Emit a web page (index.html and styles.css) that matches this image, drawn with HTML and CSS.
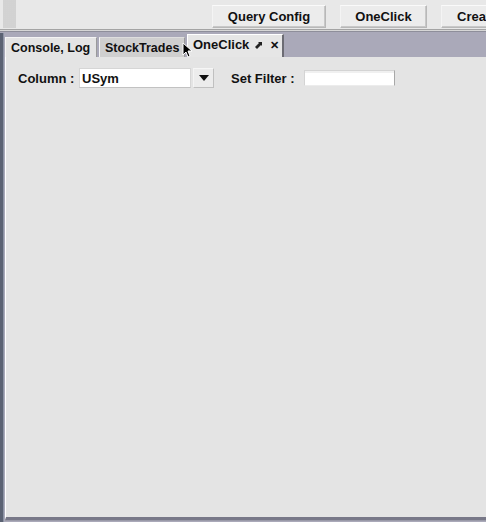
FILE: index.html
```html
<!DOCTYPE html>
<html>
  <head>
    <title>OneClick</title>
    <meta name="viewport" content="width=device-width, initial-scale=1.0" />
    <link rel="stylesheet" href="styles.css">
  </head>
  <body>
    <div class="toolbar">
      <div class="grip"></div>
      <div class="toolbar-buttons">
        <button class="tool-button query">Query Config</button>
        <button class="tool-button oneclick">OneClick</button>
        <button class="tool-button create">Create</button>
      </div>
    </div>
    <div class="main">
      <div class="tabs">
        <div class="tab tab-console">Console, Log</div>
        <div class="tab tab-hover">StockTrades</div>
        <div class="tab tab-active">
          <span class="tab-title">OneClick</span>
          <svg class="pin" width="8" height="8" viewBox="0 0 8 8">
            <path d="M3 1 L7 1 L7 5 L6 4 L2 8 L0 6 L4 2 Z" fill="#222" />
          </svg>
          <span class="close">&#x2715;</span>
        </div>
        <svg class="cursor" width="10" height="16" viewBox="0 0 10 16">
          <path d="M1 1 L1 13 L4 10 L6 15 L8 14 L6 9 L10 9 Z" fill="#000" stroke="#fff" stroke-width="1" />
        </svg>
      </div>
      <div class="panel">
        <div class="filter-row">
          <span class="label label-column">Column :</span>
          <div class="combo">
            <div class="combo-field">USym</div>
            <div class="combo-arrow">
              <svg width="10" height="6" viewBox="0 0 10 6"><path d="M0 0 L10 0 L5 6 Z" fill="#111" /></svg>
            </div>
          </div>
          <span class="label label-filter">Set Filter :</span>
          <div class="text-field"></div>
        </div>
      </div>
    </div>
  </body>
</html>
```
FILE: styles.css
```css
html,
body {
  margin: 0;
  height: 100%;
}
body {
  width: 486px;
  height: 522px;
  overflow: hidden;
  font-family: "Liberation Sans", Arial, sans-serif;
  font-weight: bold;
  font-size: 13px;
  color: #111;
  background: #aaa9b9;
}
.toolbar {
  height: 29px;
  display: flex;
  background: #e8e8e8;
  border-bottom: 1px solid #a4a4a4;
  box-shadow: 0 1px 0 #d6d6d6, 0 2px 0 #8e8e9a;
}
.grip {
  width: 13px;
  margin: 0 0 1px 3px;
  background-color: #f0f0f0;
  background-image: radial-gradient(circle at 1px 1px, #c8c8c8 0.6px, transparent 1px);
  background-size: 2px 2px;
}
.toolbar-buttons {
  flex: 1;
  display: flex;
  justify-content: flex-end;
  align-items: flex-start;
  gap: 14px;
  padding-top: 5px;
  overflow: hidden;
}
.tool-button {
  font: inherit;
  color: #111;
  height: 23px;
  padding: 0;
  background: #ececec;
  border: 1px solid #b8b8b8;
  border-top-color: #fafafa;
  border-left-color: #f4f4f4;
  box-shadow: inset -1px -1px 0 #c8c8c8;
}
.query {
  width: 114px;
}
.oneclick {
  width: 87px;
}
.create {
  width: 70px;
  flex-shrink: 0;
  margin-right: -25px;
  text-align: left;
  padding-left: 15px;
  overflow: hidden;
}
.main {
  height: 490px;
  margin-top: 3px;
  border-left: 3px solid #5b6273;
  box-shadow: inset 1px 0 0 #8c93a4;
  display: flex;
  flex-direction: column;
}
.tabs {
  position: relative;
  height: 24px;
  display: flex;
  align-items: flex-end;
  padding-left: 2px;
  gap: 2px;
  font-size: 12.5px;
}
.tab {
  height: 20px;
  box-sizing: border-box;
  padding: 3px 0 0 5px;
  background: #e4e4e4;
  border-top: 1px solid #f4f4f4;
  border-left: 1px solid #f6f6f6;
  border-right: 1px solid #9a9a9a;
  white-space: nowrap;
}
.tab-console {
  width: 92px;
}
.tab-hover {
  width: 86px;
  background: #cfcfcf;
  border-top-color: #dedede;
}
.tab-active {
  width: 97px;
  height: 23px;
  padding: 2px 0 0 5px;
  background: #e6e6e6;
  border-top-color: #ffffff;
  border-left: 1px solid #ffffff;
  border-right: 2px solid #6c6c74;
  display: flex;
  align-items: flex-start;
  font-size: 13px;
}
.tab-title {
  width: 62px;
}
.pin {
  margin-top: 4px;
}
.close {
  margin-left: 7px;
  font-size: 11px;
  line-height: 16px;
}
.cursor {
  position: absolute;
  left: 179px;
  top: 9px;
}
.panel {
  flex: 1;
  margin-left: 2px;
  background: #e4e4e4;
  border-left: 1px solid #ffffff;
  border-bottom: 3px solid #787888;
  box-shadow: 0 1px 0 #9a9aa8;
  margin-bottom: 3px;
}
.filter-row {
  display: flex;
  align-items: center;
  padding: 11px 0 0 12px;
  height: 20px;
}
.label-column {
  width: 61px;
}
.combo {
  display: flex;
  height: 20px;
}
.combo-field {
  width: 112px;
  box-sizing: border-box;
  background: #fff;
  border: 1px solid #d6d6d6;
  border-bottom-color: #c2c2c2;
  padding: 2px 2px 0;
}
.combo-arrow {
  width: 21px;
  margin-left: 2px;
  box-sizing: border-box;
  background: #ececec;
  border: 1px solid #c0c0c0;
  border-top-color: #f6f6f6;
  border-left-color: #f4f4f4;
  display: flex;
  align-items: center;
  justify-content: center;
}
.label-filter {
  width: 73px;
  margin-left: 17px;
}
.text-field {
  width: 91px;
  height: 16px;
  box-sizing: border-box;
  background: #fff;
  border: 1px solid #d4d4d4;
  border-right-color: #a8a8a8;
  border-bottom-color: #ececec;
  box-shadow: inset 0 2px 0 #f0f0f0;
}
```
